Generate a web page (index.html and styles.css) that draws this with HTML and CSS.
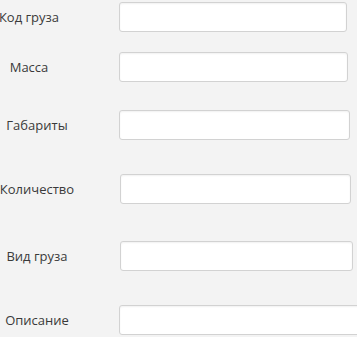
FILE: index.html
```html
<!DOCTYPE html>
<html lang="ru">
<head>
  <meta charset="UTF-8">
  <meta name="viewport" content="width=device-width, initial-scale=1.0">
  <title>Груз</title>
  <link rel="stylesheet" href="styles.css">
</head>
<body>
  <form class="cargo-form">
    <div class="row">
      <label class="label short" for="code"><span>Код груза</span></label>
      <input id="code" type="text">
    </div>
    <div class="row">
      <label class="label short" for="mass"><span>Масса</span></label>
      <input id="mass" type="text">
    </div>
    <div class="row">
      <label class="label" for="size"><span>Габариты</span></label>
      <input id="size" type="text">
    </div>
    <div class="row">
      <label class="label" for="count"><span>Количество</span></label>
      <input id="count" type="text">
    </div>
    <div class="row">
      <label class="label" for="kind"><span>Вид груза</span></label>
      <input id="kind" type="text">
    </div>
    <div class="row">
      <label class="label" for="desc"><span>Описание</span></label>
      <input id="desc" type="text">
    </div>
  </form>
</body>
</html>
```

FILE: styles.css
```css
body {
  margin: 0;
  padding: 0;
  background: #f3f3f3;
  font-family: 'Open Sans', 'Noto Sans', sans-serif;
  font-size: 13px;
  color: #3a3a3a;
  overflow: hidden;
}
.cargo-form {
  display: flex;
  flex-direction: column;
  padding-top: 2px;
}
.row {
  display: flex;
  align-items: center;
  height: 30px;
}
.row:nth-child(2) { margin-top: 20px; }
.row:nth-child(3) { margin-top: 28px; }
.row:nth-child(4) { margin-top: 34px; }
.row:nth-child(5) { margin-top: 37px; }
.row:nth-child(6) { margin-top: 34px; }
.label {
  display: flex;
  justify-content: center;
  flex: 0 0 74px;
  min-width: 0;
  margin-right: 45px;
  white-space: nowrap;
}
.label.short {
  flex-basis: 58px;
  margin-right: 61px;
}
.row input {
  flex-shrink: 0;
  box-sizing: border-box;
  height: 30px;
  width: 228px;
  margin: 0;
  border: 1px solid #d2d2d2;
  border-radius: 3px;
  background: #fff;
  box-shadow: inset 0 1px 2px rgba(0,0,0,0.06);
  font: inherit;
  padding: 4px 8px;
}
.row:nth-child(2) input { width: 229px; }
.row:nth-child(3) input { width: 231px; }
.row:nth-child(4) input { width: 231px; margin-left: 1px; }
.row:nth-child(5) input { width: 233px; margin-left: 1px; }
.row:nth-child(6) input { width: 250px; }
```
